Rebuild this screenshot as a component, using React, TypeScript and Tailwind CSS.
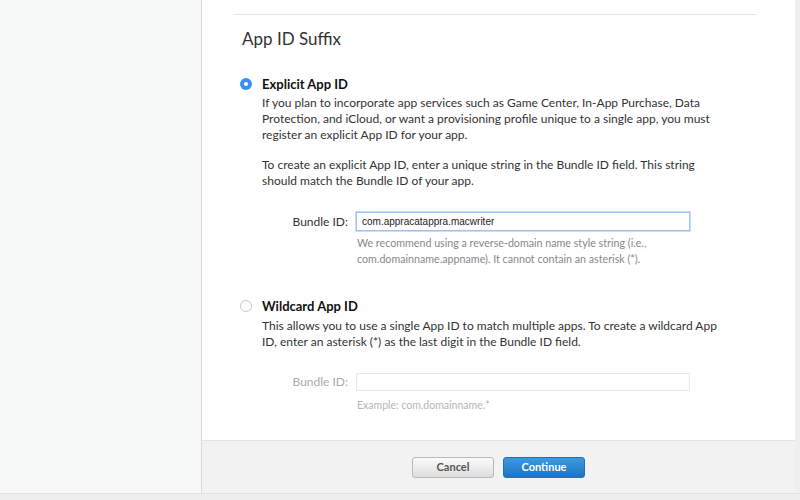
import React from 'react'

function Radio({ checked }: { checked: boolean }) {
  if (checked) {
    return (
      <span className="mt-[1px] flex h-[12px] w-[12px] shrink-0 items-center justify-center rounded-full bg-[#3b8ff0]">
        <span className="h-[4px] w-[4px] rounded-full bg-white" />
      </span>
    )
  }
  return <span className="mt-[1px] h-[12px] w-[12px] shrink-0 rounded-full border border-[#c8c8c8] bg-white" />
}

export default function App() {
  return (
    <div className="flex h-[500px] w-[800px] flex-col bg-[#efefef] text-[#333]" style={{ fontFamily: 'Lato, "Open Sans", sans-serif' }}>
      <div className="flex h-[493px]">
        <div className="w-[202px] shrink-0 border-r border-[#dcdcdc] bg-[#f7f8f8]" />
        <div className="flex w-[593px] flex-col bg-white shadow-[1px_1px_2px_rgba(0,0,0,0.15)]">
          <div className="flex-1 pl-[32px] pr-[38px]">
            <div className="mt-[14px] border-t border-[#e6e6e6]" />
            <h2 className="mt-[13px] pl-[8px] text-[17px] leading-[22px] text-[#333]">App ID Suffix</h2>

            <div className="mt-[27px] flex gap-[10px] pl-[6px]">
              <Radio checked />
              <div className="text-[12px] leading-[16px]">
                <div className="text-[13px] font-bold leading-[14px] text-[#111]">Explicit App ID</div>
                <p className="mt-[4px]">
                  If you plan to incorporate app services such as Game Center, In-App Purchase, Data<br />
                  Protection, and iCloud, or want a provisioning profile unique to a single app, you must<br />
                  register an explicit App ID for your app.
                </p>
                <p className="mt-[14px]">
                  To create an explicit App ID, enter a unique string in the Bundle ID field. This string<br />
                  should match the Bundle ID of your app.
                </p>
              </div>
            </div>

            <div className="mt-[23px] flex items-center">
              <label className="w-[122px] pr-[8px] text-right text-[12px]">Bundle ID:</label>
              <input
                readOnly
                value="com.appracatappra.macwriter"
                className="h-[19px] w-[334px] border border-[#9cc4ee] px-[5px] text-[10px] text-[#222] outline-none shadow-[0_0_0_1px_#c9defa]"
                style={{ fontFamily: '"Liberation Sans", Arial, sans-serif' }}
              />
            </div>
            <p className="ml-[123px] mt-[4px] text-[10.7px] leading-[16px] text-[#888]">
              We recommend using a reverse-domain name style string (i.e.,<br />
              com.domainname.appname). It cannot contain an asterisk (*).
            </p>

            <div className="mt-[32px] flex gap-[10px] pl-[6px]">
              <Radio checked={false} />
              <div className="text-[12px] leading-[16px]">
                <div className="text-[13px] font-bold leading-[14px] text-[#111]">Wildcard App ID</div>
                <p className="mt-[5px]">
                  This allows you to use a single App ID to match multiple apps. To create a wildcard App<br />
                  ID, enter an asterisk (*) as the last digit in the Bundle ID field.
                </p>
              </div>
            </div>

            <div className="mt-[23px] flex items-center">
              <label className="w-[122px] pr-[8px] text-right text-[12px] text-[#aaa]">Bundle ID:</label>
              <input readOnly disabled className="h-[18px] w-[334px] border border-[#e8e8e8] bg-white" />
            </div>
            <p className="ml-[123px] mt-[7px] text-[10.5px] leading-[14px] text-[#b5b5b5]">Example: com.domainname.*</p>
          </div>

          <div className="flex h-[53px] items-start justify-center gap-[9px] border-t border-[#e3e3e3] bg-[#f2f2f2] pt-[16px]">
            <button className="h-[21px] w-[82px] rounded-[3px] border border-[#b9b9b9] bg-gradient-to-b from-[#fbfbfb] to-[#dedede] text-[11px] font-bold text-[#555]">
              Cancel
            </button>
            <button className="h-[21px] w-[82px] rounded-[3px] border border-[#1f6fba] bg-gradient-to-b from-[#3a9be0] to-[#1f73c4] text-[11px] font-bold text-white">
              Continue
            </button>
          </div>
        </div>
        <div className="flex-1 bg-[#efefef]" />
      </div>
      <div className="flex-1 border-t border-[#e2e2e2] bg-[#eeeeee]" />
    </div>
  )
}
